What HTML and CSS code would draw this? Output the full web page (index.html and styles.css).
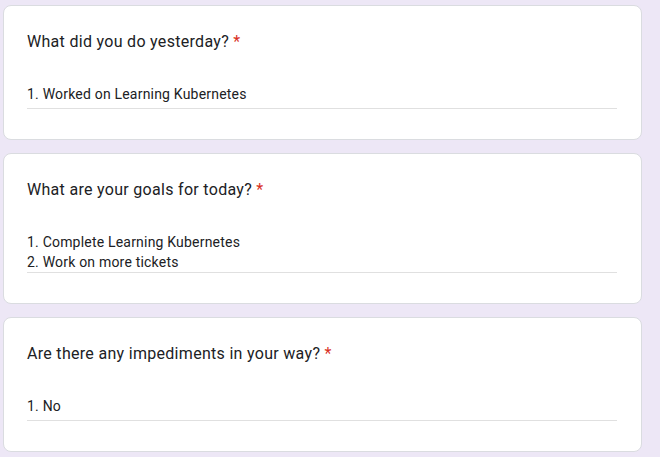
FILE: index.html
```html
<!DOCTYPE html>
<html>
<head>
<meta charset="utf-8">
<link rel="stylesheet" href="styles.css">
</head>
<body>
<div class="form">
  <div class="card">
    <div class="title">What did you do yesterday? <span class="req">*</span></div>
    <div class="answer">1. Worked on Learning Kubernetes</div>
  </div>
  <div class="card">
    <div class="title">What are your goals for today? <span class="req">*</span></div>
    <div class="answer multi">1. Complete Learning Kubernetes<br>2. Work on more tickets</div>
  </div>
  <div class="card">
    <div class="title">Are there any impediments in your way? <span class="req">*</span></div>
    <div class="answer">1. No</div>
  </div>
</div>
</body>
</html>
```

FILE: styles.css
```css
html, body {
  margin: 0;
  padding: 0;
  background: #ede7f6;
}
.form {
  padding: 5px 0 0 3px;
  display: flex;
  flex-direction: column;
  gap: 13px;
  width: 639px;
}
.card {
  background: #fff;
  border: 1px solid #dadce0;
  border-radius: 8px;
  padding: 24px 24px 30px 23px;
}
.title {
  font-family: Roboto, "Liberation Sans", sans-serif;
  font-size: 16px;
  line-height: 24px;
  color: #202124;
  letter-spacing: 0.3px;
}
.req {
  color: #d93025;
}
.answer {
  margin-top: 30px;
  font-family: Roboto, "Liberation Sans", sans-serif;
  font-size: 14px;
  line-height: 20px;
  color: #202124;
  letter-spacing: 0.2px;
  padding-bottom: 4px;
  border-bottom: 1px solid #e0e0e0;
}
.answer.multi {
  padding-bottom: 0;
}
```
